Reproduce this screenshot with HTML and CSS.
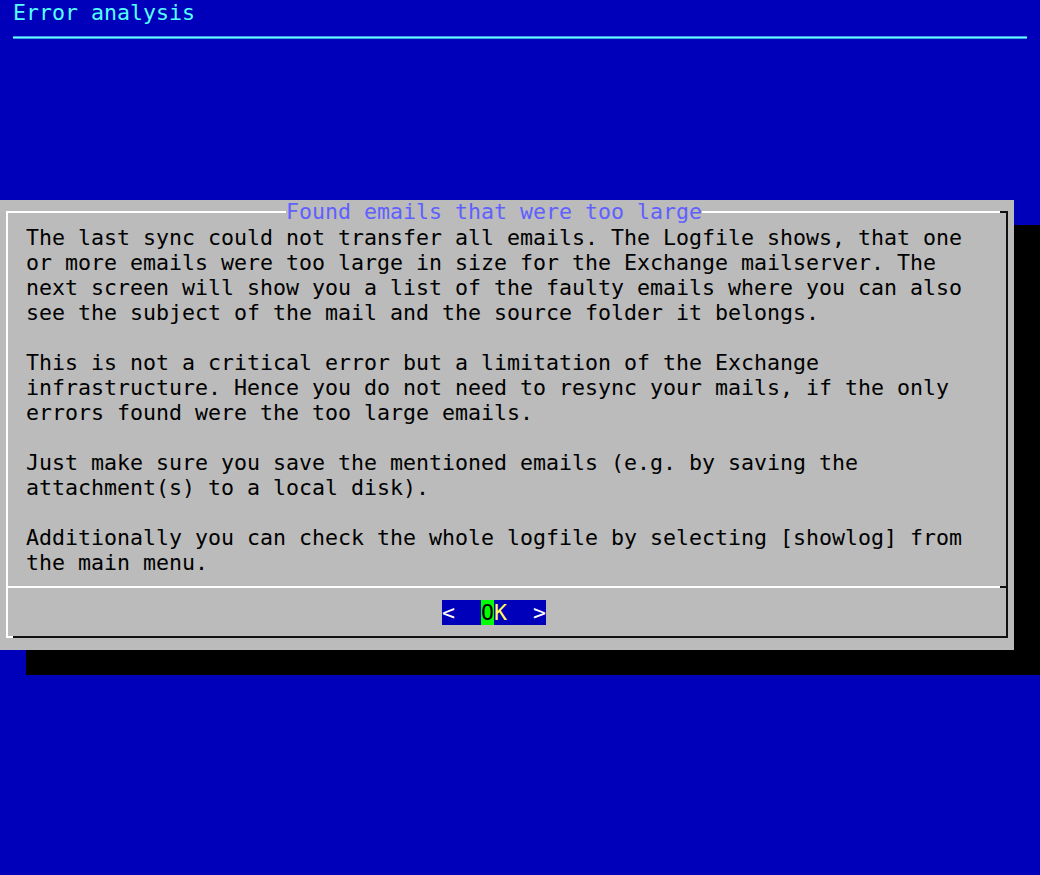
FILE: index.html
```html
<!DOCTYPE html>
<html lang="en">
<head>
<meta charset="utf-8">
<title>Error analysis</title>
<link rel="stylesheet" href="styles.css">
</head>
<body>
<div class="screen">
  <header class="backtitle">Error analysis</header>
  <div class="rule-row"><div class="rule"></div></div>

  <section class="dialog">
    <div class="frame">
      <h1 class="frame-title">Found emails that were too large</h1>
      <div class="message">
        <p>The last sync could not transfer all emails. The Logfile shows, that one<br>or more emails were too large in size for the Exchange mailserver. The<br>next screen will show you a list of the faulty emails where you can also<br>see the subject of the mail and the source folder it belongs.</p>
        <p>This is not a critical error but a limitation of the Exchange<br>infrastructure. Hence you do not need to resync your mails, if the only<br>errors found were the too large emails.</p>
        <p>Just make sure you save the mentioned emails (e.g. by saving the<br>attachment(s) to a local disk).</p>
        <p>Additionally you can check the whole logfile by selecting [showlog] from<br>the main menu.</p>
      </div>
      <div class="separator"></div>
      <div class="buttons"><span class="btn">&lt;  <span class="hot">O</span><span class="key">K</span>  &gt;</span></div>
    </div>
  </section>
</div>
</body>
</html>
```
FILE: styles.css
```css
html, body {
  margin: 0;
  padding: 0;
}

body {
  background: #0000bb;
  width: 1040px;
  height: 875px;
  overflow: hidden;
  font-family: "DejaVu Sans Mono", monospace;
  font-size: 21.6px;
  line-height: 25px;
}

.screen {
  display: flex;
  flex-direction: column;
}

.backtitle {
  height: 25px;
  padding-left: 13px;
  color: #55ffff;
  white-space: pre;
}

.rule-row {
  height: 25px;
}

.rule {
  margin-top: 11px;
  margin-left: 13px;
  width: 1014px;
  height: 3px;
  background: linear-gradient(#3b9be6 0, #3b9be6 1px, #66ffff 1px, #66ffff 2px, #3b9be6 2px);
}

.dialog {
  margin-top: 150px;
  width: 1014px;
  height: 450px;
  background: #bbbbbb;
  box-shadow: 26px 25px 0 #000000;
  padding-top: 11px;
  padding-left: 6px;
  box-sizing: border-box;
}

.frame {
  position: relative;
  width: 1002px;
  box-sizing: border-box;
  border-top: 2px solid #ffffff;
  border-left: 2px solid #ffffff;
  border-right: 2px solid #111111;
  border-bottom: 2px solid #111111;
  padding-top: 12px;
  padding-bottom: 11px;
}

.frame::before {
  content: "";
  position: absolute;
  top: -2px;
  right: -2px;
  width: 8px;
  height: 2px;
  background: #111111;
}

.frame::after {
  content: "";
  position: absolute;
  bottom: -2px;
  left: -2px;
  width: 7px;
  height: 2px;
  background: #ffffff;
}

.frame-title {
  position: absolute;
  top: -12px;
  left: 278px;
  margin: 0;
  font-size: inherit;
  font-weight: normal;
  line-height: 21px;
  background: #bbbbbb;
  color: #6060ff;
  white-space: pre;
}

.message {
  padding-left: 18px;
  color: #000000;
}

.message p {
  margin: 0 0 25px 0;
  white-space: pre;
}

.message p:last-child {
  margin-bottom: 0;
}

.separator {
  margin-top: 11px;
  height: 2px;
  background: linear-gradient(to right, #ffffff 0, #ffffff 992px, #111111 992px);
}

.buttons {
  margin-top: 12px;
  height: 25px;
  padding-left: 434px;
}

.btn {
  display: inline-block;
  background: #0000bb;
  color: #ffffff;
  line-height: 25px;
  white-space: pre;
}

.hot {
  background: #00ff00;
  color: #000000;
}

.key {
  color: #ffff55;
}
```
